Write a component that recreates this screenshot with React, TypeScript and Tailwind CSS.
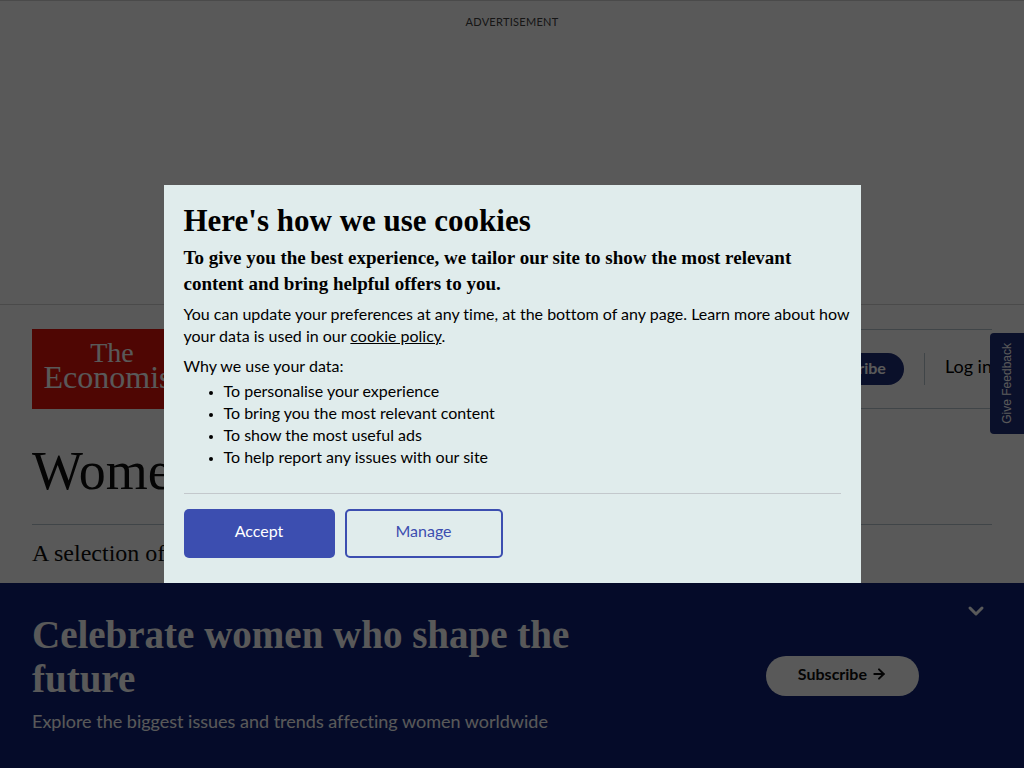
import { ChevronDown, ArrowRight } from "lucide-react";

const serif = "font-['Liberation_Serif',serif]";

const reasons = [
  "To personalise your experience",
  "To bring you the most relevant content",
  "To show the most useful ads",
  "To help report any issues with our site",
];

function Masthead() {
  return (
    <header className="mx-8 mt-6 flex h-20 items-center justify-between border-y border-[#b7c6cf]">
      <a
        href="#home"
        className="flex h-20 w-40 shrink-0 flex-col items-center bg-[#e3120b] pt-3 text-white font-['Liberation_Serif',serif]"
      >
        <span className="text-[28px] leading-6">The</span>
        <span className="text-[32px] leading-6">Economist</span>
      </a>
      <div className="flex items-center">
        <a
          href="#subscribe"
          className="flex h-8 items-center rounded-full bg-[#1f2e7a] px-[18px] pb-[2px] text-base font-bold text-white"
        >
          Subscribe
        </a>
        <a
          href="#login"
          className="ml-5 flex h-8 items-center border-l border-[#b7c6cf] pl-5 pb-[6px] text-lg text-black"
        >
          Log in
        </a>
      </div>
    </header>
  );
}

function SubscribeBanner() {
  return (
    <section className="fixed inset-x-0 bottom-0 flex h-[185px] items-center justify-between bg-[#0f2277] px-8 text-white">
      <div className="w-[60%] pb-[6px]">
        <h2 className="text-[39px] font-bold leading-[44px] font-['Liberation_Serif',serif]">
          Celebrate women who shape the future
        </h2>
        <p className="mt-2 text-lg leading-6">
          Explore the biggest issues and trends affecting women worldwide
        </p>
      </div>
      <a
        href="#subscribe"
        className="mr-[73px] flex h-10 items-center gap-1 rounded-full bg-white px-8 pb-1 text-base font-bold text-[#0d0d0d]"
      >
        Subscribe
        <ArrowRight size={16} strokeWidth={3} />
      </a>
      <button
        type="button"
        aria-label="Collapse"
        className="absolute right-9 top-4"
      >
        <ChevronDown size={24} strokeWidth={3} />
      </button>
    </section>
  );
}

function CookieDialog() {
  return (
    <div className="fixed inset-0 flex items-center justify-center bg-black/65">
      <div
        role="dialog"
        aria-modal="true"
        aria-labelledby="cookie-title"
        className="w-full max-w-[697px] bg-[#e0ecec] px-5 pt-5 pb-[25px] text-base leading-[22px] text-black"
      >
        <h2 id="cookie-title" className={`${serif} text-[31px] leading-8 font-bold`}>
          Here's how we use cookies
        </h2>
        <p className={`${serif} mt-2 text-[19px] leading-[26px] font-bold`}>
          To give you the best experience, we tailor our site to show the most
          relevant content and bring helpful offers to you.
        </p>
        <p className="-mr-4 mt-[6px]">
          You can update your preferences at any time, at the bottom of any
          page. Learn more about how your data is used in our{" "}
          <a href="#cookies" className="underline">
            cookie policy
          </a>
          .
        </p>
        <p className="mt-2">Why we use your data:</p>
        <ul className="mt-[3px] list-disc pl-10">
          {reasons.map((reason) => (
            <li key={reason} className="marker:text-xs">
              {reason}
            </li>
          ))}
        </ul>
        <div className="mt-[25px] flex gap-[10px] border-t border-[#c3c8cc] pt-[15px]">
          <button
            type="button"
            className="h-[49px] w-[151px] rounded-[5px] bg-[#3c4eb0] pb-[6px] text-white"
          >
            Accept
          </button>
          <button
            type="button"
            className="h-[49px] w-[158px] rounded-[5px] border-2 border-[#3c4eb0] pb-[6px] text-[#3c4eb0]"
          >
            Manage
          </button>
        </div>
      </div>
    </div>
  );
}

export default function App() {
  return (
    <div className="min-h-screen bg-white font-['Lato',sans-serif] text-[#0d0d0d] [font-variant-ligatures:none]">
      <aside className="h-[305px] border-y border-[#d5d5d5] pt-[13px] text-center text-[11px] leading-4 tracking-wide text-[#404040]">
        ADVERTISEMENT
      </aside>
      <Masthead />
      <main className="mx-8 pb-52">
        <h1 className={`${serif} pt-8 text-[54px] leading-[60px]`}>Women</h1>
        <p className={`${serif} mt-[23px] border-t border-[#b7c6cf] pt-3 text-2xl leading-8`}>
          A selection of our coverage
        </p>
      </main>
      <button
        type="button"
        className="fixed right-0 top-[333px] flex h-[101px] w-[34px] items-center justify-center rounded-l-[4px] bg-[#1f2e7a] font-['Liberation_Sans',sans-serif] text-xs text-white"
      >
        <span className="rotate-180 [writing-mode:vertical-rl]">Give Feedback</span>
      </button>
      <SubscribeBanner />
      <CookieDialog />
    </div>
  );
}
